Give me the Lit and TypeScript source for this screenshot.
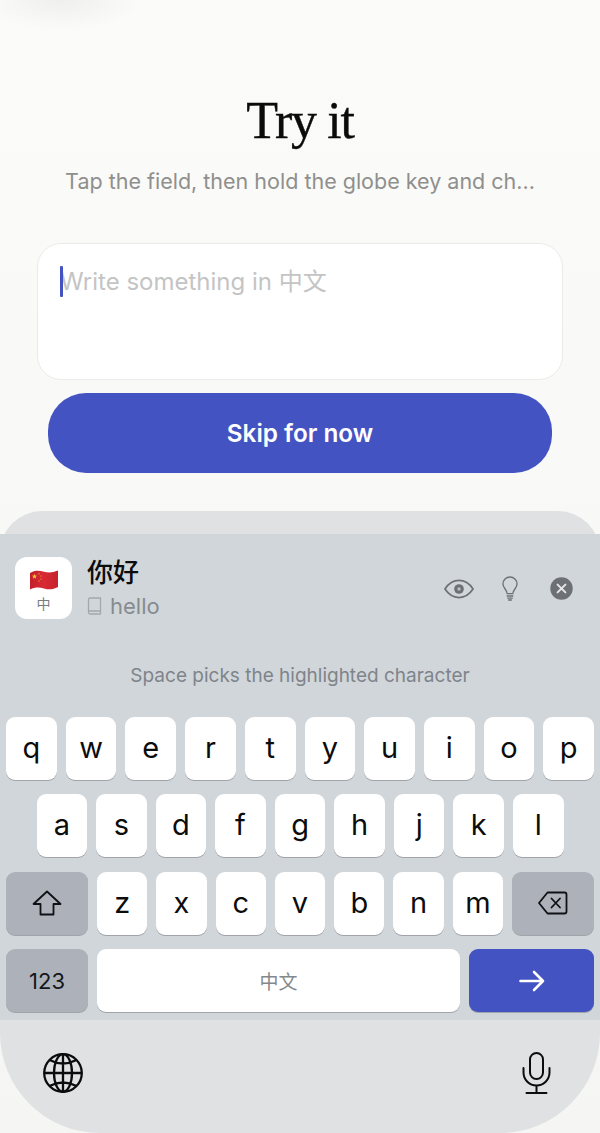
import { LitElement, html, css, svg } from "lit";
import { customElement } from "lit/decorators.js";

const ROW1 = "qwertyuiop".split("");
const ROW2 = "asdfghjkl".split("");
const ROW3 = "zxcvbnm".split("");

const star = (x: number, y: number, r: number) => {
  const pts: string[] = [];
  for (let i = 0; i < 10; i++) {
    const a = -Math.PI / 2 + (i * Math.PI) / 5;
    const rr = i % 2 ? r * 0.42 : r;
    pts.push(`${(x + rr * Math.cos(a)).toFixed(2)},${(y + rr * Math.sin(a)).toFixed(2)}`);
  }
  return svg`<polygon points=${pts.join(" ")} fill="#f2bf3a"/>`;
};

@customElement("app-root")
export class AppRoot extends LitElement {
  static styles = css`
    :host {
      display: block;
      width: 600px;
      height: 1133px;
      overflow: hidden;
      font-family: Inter, "Noto Sans CJK SC", sans-serif;
      background:
        radial-gradient(ellipse 80px 30px at 62px 0, #efefed 0%, rgba(240, 240, 238, 0) 100%),
        linear-gradient(#fbfbf9 0%, #f5f5f3 100%);
    }
    .page { display: flex; flex-direction: column; height: 1133px; align-items: center; }
    h1 {
      margin: 93px 0 0;
      height: 56px;
      font: 400 52px/56px "Liberation Serif", serif;
      letter-spacing: -1.3px;
      -webkit-text-stroke: 0.35px #0b0b0b;
      color: #0b0b0b;
    }
    .sub {
      margin: 16px 0 0;
      font-size: 21.5px;
      line-height: 32px;
      color: #8f8f8d;
      white-space: nowrap;
    }
    .field {
      box-sizing: border-box;
      margin-top: 46px;
      width: 526px;
      height: 137px;
      background: #fff;
      border: 1px solid #ebebe8;
      border-radius: 24px;
      padding: 22px;
      display: flex;
      align-items: flex-start;
      font-size: 24px;
      line-height: 31px;
      color: #c4c4c4;
    }
    .caret { width: 3px; height: 31px; background: #4453c2; border-radius: 1px; margin-right: -3px; position: relative; }
    .cta {
      margin-top: 13px;
      width: 504px;
      height: 80px;
      border-radius: 38px;
      background: #4453c2;
      color: #fff;
      font-size: 24.3px;
      font-weight: 600;
      display: flex;
      align-items: center;
      justify-content: center;
    }
    .kb {
      margin-top: 38px;
      width: 600px;
      height: 622px;
      flex: none;
      background: #dfe1e3;
      border-radius: 42px 42px 100px 100px;
      padding-top: 23px;
      box-sizing: border-box;
    }
    .panel {
      height: 486px;
      background: #d1d6da;
      padding: 23px 6px 0;
      box-sizing: border-box;
    }
    .head { display: flex; align-items: flex-start; height: 63px; padding-left: 9px; }
    .tile {
      width: 57px;
      height: 62px;
      background: #fff;
      border-radius: 12px;
      display: flex;
      flex-direction: column;
      align-items: center;
      padding-top: 13px;
      box-sizing: border-box;
      color: #7a7d80;
      font-size: 14px;
      line-height: 16px;
      gap: 6px;
    }
    .word { margin-left: 15px; display: flex; flex-direction: column; }
    .zh { font-size: 26px; font-weight: 500; line-height: 34px; color: #0c0c0c; height: 34px; margin-top: -1px; }
    .gloss { display: flex; align-items: center; gap: 8px; font-size: 22px; line-height: 28px; color: #868b90; margin-top: 2px; }
    .tools { margin-left: auto; display: flex; align-items: center; height: 25px; margin-top: 19px; margin-right: 21px; }
    .bulb { margin-left: 28px; }
    .close { margin-left: 32px; }
    .hint {
      margin-top: 44px;
      text-align: center;
      font-size: 19px;
      line-height: 24px;
      color: #7f848a;
    }
    .rows { margin-top: 29px; display: flex; flex-direction: column; gap: 14.4px; }
    .row { display: flex; gap: 9px; height: 63px; }
    .row.mid { padding: 0 30.5px; }
    .key {
      flex: 1;
      min-width: 0;
      background: #fff;
      border-radius: 9px;
      box-shadow: 0 1px 0 #a0a4a9;
      display: flex;
      align-items: center;
      justify-content: center;
      font-size: 29px;
      color: #0c0c0c;
      padding-bottom: 2px;
      box-sizing: border-box;
    }
    .fn { flex: 0 0 82px; background: #adb2ba; padding: 0; }
    .num { font-size: 22px; color: #15171a; }
    .space { flex: 1; font-size: 19px; color: #85888b; padding: 0; }
    .go { flex: 0 0 125px; background: #4453c2; padding: 0; }
    .bar {
      height: 113px;
      display: flex;
      align-items: center;
      justify-content: space-between;
      padding: 0 49px 7px 43px;
      box-sizing: border-box;
    }
    svg { display: block; }
  `;

  render() {
    return html`<div class="page">
      <h1>Try it</h1>
      <p class="sub">Tap the field, then hold the globe key and ch...</p>
      <div class="field"><span class="caret"></span><span>Write something in 中文</span></div>
      <div class="cta">Skip for now</div>
      <div class="kb">
        <div class="panel">
          <div class="head">
            <div class="tile">
              <svg width="28" height="20" viewBox="0 0 28 20">
                <defs>
                  <linearGradient id="fl" x1="0" y1="0" x2="1" y2="0">
                    <stop offset="0" stop-color="#c2202b"/>
                    <stop offset=".5" stop-color="#d92a33"/>
                    <stop offset="1" stop-color="#c4222c"/>
                  </linearGradient>
                </defs>
                <path d="M0 3 C5 0 9 .5 14 1.800 C19 3 23 2.500 28 .5 V17 C23 19.500 19 20 14 18.500 C9 17 5 17 0 19.500 Z" fill="url(#fl)"/>
                ${star(4.5, 6.500, 2.800)}${star(9, 3.800, .9)}${star(11, 6, .9)}${star(11, 9, .9)}${star(9, 11, .9)}
              </svg>
              <span>中</span>
            </div>
            <div class="word">
              <div class="zh">你好</div>
              <div class="gloss">
                <svg width="15" height="18" viewBox="0 0 15 18" fill="none" stroke="#a3a8ad" stroke-width="1.300" stroke-linejoin="round">
                  <path d="M1.500 14.500V2.500A1.500 1.500 0 0 1 3 1H13.500V14H3A1.500 1.500 0 0 0 1.500 15.500 1.500 1.500 0 0 0 3 17H13.500V14"/>
                </svg>
                <span>hello</span>
              </div>
            </div>
            <div class="tools">
              <svg width="30" height="20" viewBox="0 0 31 20" fill="none" stroke="#6d7176" stroke-width="1.800">
                <path d="M1 10C5 4 10 1.200 15.500 1.200S26 4 30 10C26 16 21 18.800 15.500 18.800S5 16 1 10Z"/>
                <circle cx="15.500" cy="10" r="5" fill="#6d7176" stroke="none"/>
                <circle cx="15.500" cy="10" r="1.800" fill="#b9bdc2" stroke="none"/>
              </svg>
              <svg class="bulb" width="16" height="25" viewBox="0 0 17 26" fill="none" stroke="#6d7176" stroke-width="1.400" stroke-linecap="round">
                <path d="M5.500 18.500C5.500 14.500 1 12.500 1 8.300A7.500 7.500 0 0 1 16 8.300C16 12.500 11.500 14.500 11.500 18.500Z"/>
                <path d="M5.500 21H11.500M6 23.200H11M7 25.200H10"/>
              </svg>
              <svg class="close" width="23" height="23" viewBox="0 0 23 23">
                <circle cx="11.500" cy="11.500" r="11.200" fill="#6d7176"/>
                <path d="M7.600 7.600L15.400 15.400M15.400 7.600L7.600 15.400" stroke="#e4e6e8" stroke-width="2" stroke-linecap="round"/>
              </svg>
            </div>
          </div>
          <div class="hint">Space picks the highlighted character</div>
          <div class="rows">
            <div class="row">${ROW1.map((k) => html`<div class="key">${k}</div>`)}</div>
            <div class="row mid">${ROW2.map((k) => html`<div class="key">${k}</div>`)}</div>
            <div class="row">
              <div class="key fn">
                <svg width="30" height="26" viewBox="0 0 30 26" fill="none" stroke="#0f1114" stroke-width="1.800" stroke-linejoin="round">
                  <path d="M15 1.500L1.500 14H8.500V24.500H21.500V14H28.500Z"/>
                </svg>
              </div>
              ${ROW3.map((k) => html`<div class="key">${k}</div>`)}
              <div class="key fn">
                <svg width="30" height="24" viewBox="0 0 30 24" fill="none" stroke="#0f1114" stroke-width="1.800" stroke-linejoin="round" stroke-linecap="round">
                  <path d="M9.500 1.500H26.500A2 2 0 0 1 28.500 3.500V20.500A2 2 0 0 1 26.500 22.500H9.500L1 12Z"/>
                  <path d="M13.500 7.500L22 16.500M22 7.500L13.500 16.500"/>
                </svg>
              </div>
            </div>
            <div class="row">
              <div class="key fn num">123</div>
              <div class="key space">中文</div>
              <div class="key go">
                <svg width="26" height="22" viewBox="0 0 26 22" fill="none" stroke="#fff" stroke-width="2.600" stroke-linecap="round" stroke-linejoin="round">
                  <path d="M1.500 11H24M15 2L24 11L15 20"/>
                </svg>
              </div>
            </div>
          </div>
        </div>
        <div class="bar">
          <svg width="40" height="40" viewBox="0 0 40 40" fill="none" stroke="#0c0c0c" stroke-width="2.300">
            <circle cx="20" cy="20" r="18.800"/>
            <ellipse cx="20" cy="20" rx="9" ry="18.800"/>
            <path d="M20 1V39M1 20H39M6.500 7Q20 14 33.500 7M6.500 33Q20 26 33.500 33"/>
          </svg>
          <svg width="29" height="42" viewBox="0 0 29 42" fill="none" stroke="#0c0c0c" stroke-width="2" stroke-linecap="round">
            <rect x="8" y="1" width="13" height="26" rx="6.500"/>
            <path d="M1.500 16V20.500A13 13 0 0 0 27.500 20.500V16M14.500 33.500V41M4.500 41H24.500"/>
          </svg>
        </div>
      </div>
    </div>`;
  }
}
